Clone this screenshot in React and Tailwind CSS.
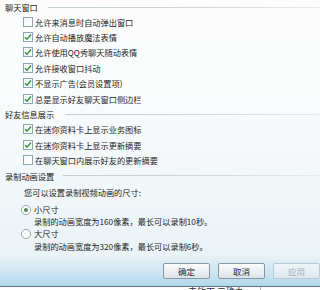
import React from "react";

const Check = ({ checked }) => (
  <div className="w-[10px] h-[10px] border border-[#8ea6b4] bg-gradient-to-br from-[#f4f6f7] to-[#ffffff] flex items-center justify-center shrink-0">
    {checked && (
      <svg width="8" height="8" viewBox="0 0 8 8">
        <path d="M1 4.2 L3 6.2 L7 1.6" fill="none" stroke="#2d9a38" strokeWidth="1.5" />
      </svg>
    )}
  </div>
);

const Radio = ({ checked }) => (
  <div className="w-[10px] h-[10px] rounded-full border border-[#93a6b1] bg-white flex items-center justify-center shrink-0">
    {checked && <div className="w-[4px] h-[4px] rounded-full bg-[#4d8a52]" />}
  </div>
);

const Header = ({ children, h = "h-[14px]", gap = "ml-[10px]" }) => (
  <div className={`flex items-center ${h} pl-[5px]`}>
    <span className="leading-none text-[#1a1a1a]">{children}</span>
    <div className={`flex-1 ${gap} h-px bg-gradient-to-r from-[#c3ced5] via-[#cdd7dd] to-[#e6ecef]`} />
  </div>
);

const CRow = ({ checked, children }) => (
  <div className="flex items-center h-[15.4px] pl-[23px] gap-[2px]">
    <Check checked={checked} />
    <span className="leading-none">{children}</span>
  </div>
);

const Btn = ({ children, disabled }) => (
  <div
    className={`w-[47px] h-[16px] rounded-[2px] border flex items-center justify-center leading-none text-[8.5px] ${
      disabled
        ? "border-[#b9cbd5] bg-gradient-to-b from-[#eef5f8] to-[#dde9ef] text-[#9fb1bb]"
        : "border-[#8797a1] bg-gradient-to-b from-[#fbfcfc] to-[#dbe4e9] text-[#1f2a30]"
    }`}
  >
    {children}
  </div>
);

export default function App() {
  return (
    <div className="w-[320px] h-[290px] overflow-hidden flex flex-col font-['Noto_Sans_CJK_SC','Noto_Sans',sans-serif] text-[8.2px] text-[#1e1e1e]">
      <div className="h-[256px] bg-gradient-to-b from-[#fdfdfd] via-[#f7fafb] to-[#eaf3f7] flex flex-col">
        <Header>聊天窗口</Header>
        <CRow checked={false}>允许来消息时自动弹出窗口</CRow>
        <CRow checked>允许自动播放魔法表情</CRow>
        <CRow checked>允许使用QQ秀聊天随动表情</CRow>
        <CRow checked>允许接收窗口抖动</CRow>
        <CRow checked>不显示广告(会员设置项)</CRow>
        <CRow checked>总是显示好友聊天窗口侧边栏</CRow>
        <Header h="h-[15.4px]" gap="ml-[11px]">好友信息展示</Header>
        <CRow checked>在迷你资料卡上显示业务图标</CRow>
        <CRow checked>在迷你资料卡上显示更新摘要</CRow>
        <CRow checked={false}>在聊天窗口内展示好友的更新摘要</CRow>
        <Header h="h-[15.4px]" gap="ml-[9px]">录制动画设置</Header>
        <div className="flex items-center h-[12px] mt-[3.3px] pl-[24px]">
          <span className="leading-none">您可以设置录制视频动画的尺寸:</span>
        </div>
        <div className="flex items-center h-[12px] mt-[5px] pl-[21px] gap-[3px]">
          <Radio checked />
          <span className="leading-none">小尺寸</span>
        </div>
        <div className="flex items-center h-[12px] pl-[34px]">
          <span className="leading-none">录制的动画宽度为160像素，最长可以录制10秒。</span>
        </div>
        <div className="flex items-center h-[12px] pl-[21px] gap-[3px]">
          <Radio checked={false} />
          <span className="leading-none">大尺寸</span>
        </div>
        <div className="flex items-center h-[12px] mt-[1px] pl-[34px]">
          <span className="leading-none">录制的动画宽度为320像素，最长可以录制6秒。</span>
        </div>
      </div>
      <div className="h-[30px] bg-gradient-to-b from-[#e6f1f6] via-[#cfe6f2] to-[#b2d7ec] flex items-start pt-[7px] pl-[163px] gap-[8px]">
        <Btn>确定</Btn>
        <Btn>取消</Btn>
        <Btn disabled>应用</Btn>
      </div>
      <div className="h-px bg-[#5b7585]" />
      <div className="h-[3px] bg-white overflow-hidden flex">
        <div className="pl-[188px] w-[260px] text-[9px] leading-[9px] text-[#333]">未放下 二确办</div>
        <div className="w-px h-full bg-[#a9b4ba]" />
      </div>
    </div>
  );
}
